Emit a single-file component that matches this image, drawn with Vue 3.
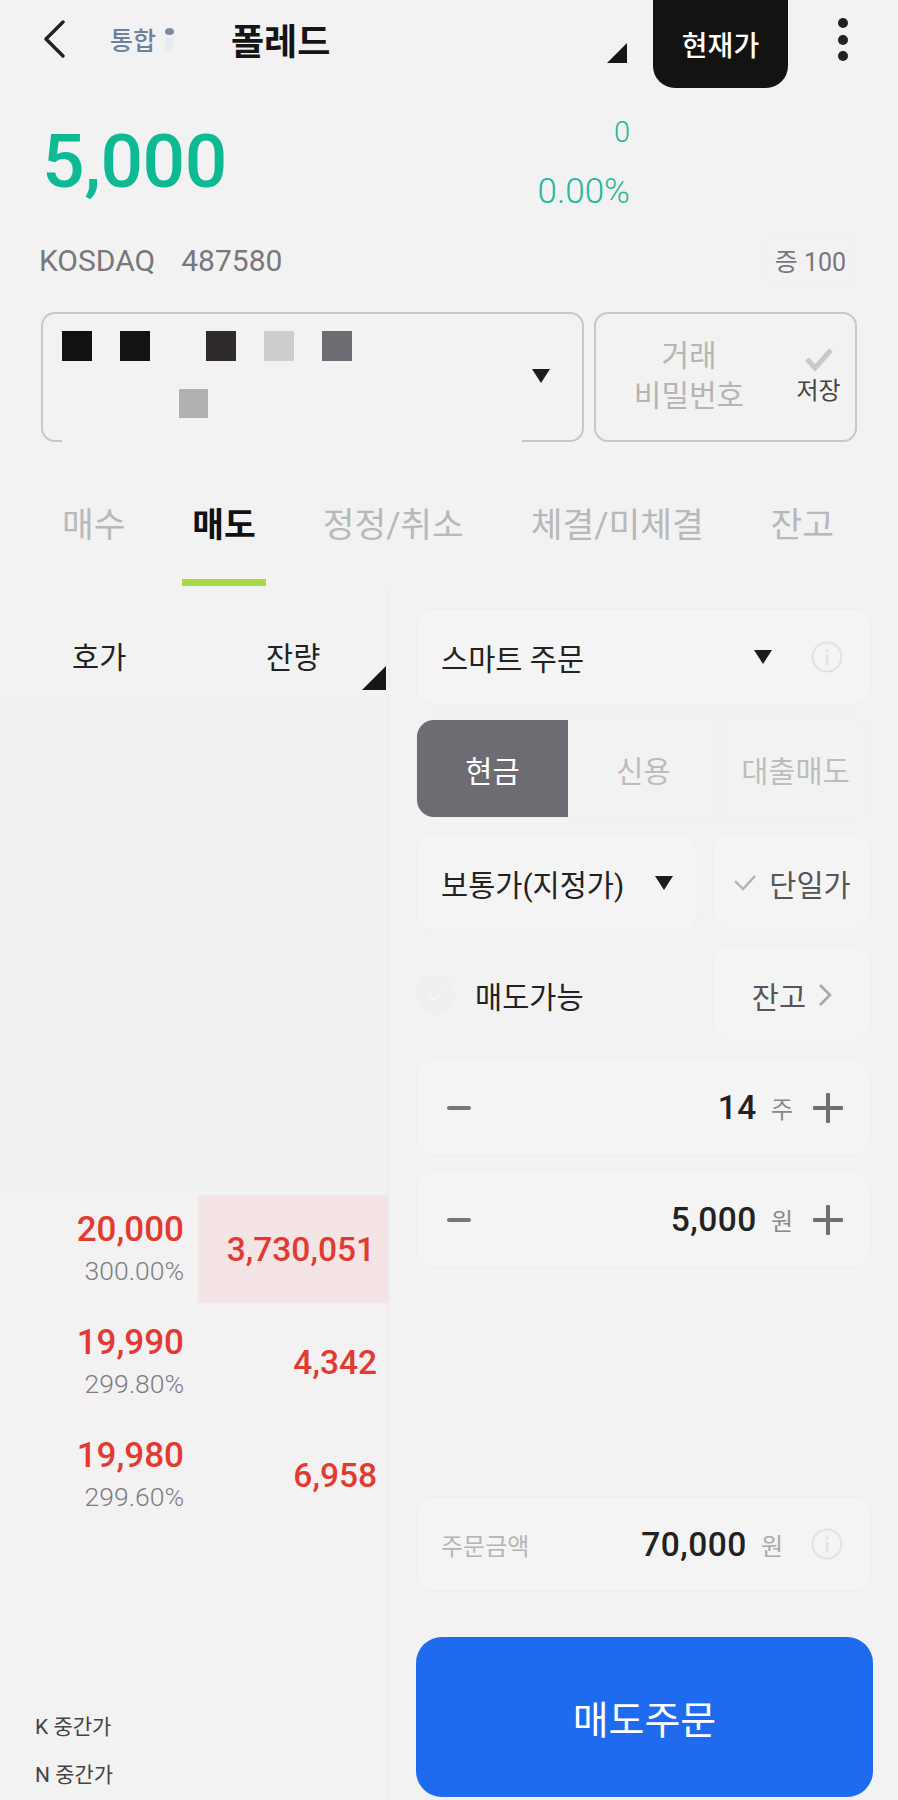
<script setup>
const tabs = [
  { label: '매수', active: false },
  { label: '매도', active: true },
  { label: '정정/취소', active: false },
  { label: '체결/미체결', active: false },
  { label: '잔고', active: false },
]
const rows = [
  { price: '20,000', pct: '300.00%', qty: '3,730,051', hi: true },
  { price: '19,990', pct: '299.80%', qty: '4,342', hi: false },
  { price: '19,980', pct: '299.60%', qty: '6,958', hi: false },
]
const redacted = ['#111111', '#131313', 'transparent', '#2f2a2b', '#cdcdcd', '#6d6c73']
</script>

<template>
  <div class="page">
    <header class="top">
      <svg class="back" width="24" height="38" viewBox="0 0 24 38"><path d="M21 2 L4 19 L21 36" fill="none" stroke="#222" stroke-width="3.4" stroke-linecap="round" stroke-linejoin="round"/></svg>
      <span class="market">통합</span>
      <span class="dotcol"><i></i><i class="pale"></i></span>
      <span class="name">폴레드</span>
      <span class="corner small"></span>
      <button class="now">현재가</button>
      <span class="more"><i></i><i></i><i></i></span>
    </header>

    <section class="quote">
      <div class="price">5,000</div>
      <div class="change"><div>0</div><div>0.00%</div></div>
    </section>

    <section class="meta">
      <span class="code"><span>KOSDAQ</span><span>487580</span></span>
      <span class="lot">증 100</span>
    </section>

    <section class="account">
      <div class="acct">
        <div class="blur">
          <div class="line1"><i v-for="(c, i) in redacted" :key="i" :style="{ background: c }"></i></div>
          <div class="line2"><i></i></div>
        </div>
        <span class="tri acct-tri"></span>
      </div>
      <div class="pw">
        <div class="pw-text">거래<br>비밀번호</div>
        <div class="pw-save">
          <svg width="30" height="26" viewBox="0 0 30 26"><path d="M3 13 L11 22 L27 4" fill="none" stroke="#c9c9c9" stroke-width="5"/></svg>
          <span>저장</span>
        </div>
      </div>
    </section>

    <nav class="tabs">
      <span v-for="t in tabs" :key="t.label" class="tab" :class="{ on: t.active }">{{ t.label }}</span>
    </nav>

    <main class="body">
      <aside class="book">
        <div class="book-head"><span class="h1">호가</span><span class="h2">잔량</span><span class="corner big"></span></div>
        <div class="book-empty"></div>
        <div class="book-list">
          <div v-for="r in rows" :key="r.price" class="row">
            <div class="p"><b>{{ r.price }}</b><small>{{ r.pct }}</small></div>
            <div class="q" :class="{ hi: r.hi }">{{ r.qty }}</div>
          </div>
        </div>
        <div class="mid"><div>K 중간가</div><div>N 중간가</div></div>
      </aside>

      <div class="form">
        <div class="card smart">
          <span class="txt">스마트 주문</span>
          <span class="tri"></span>
          <svg class="info" width="32" height="32" viewBox="0 0 32 32"><circle cx="16" cy="16" r="14.5" fill="none" stroke="#e2e2e2" stroke-width="2"/><circle cx="16" cy="10" r="1.8" fill="#e2e2e2"/><rect x="14.6" y="14" width="2.8" height="10" fill="#e2e2e2"/></svg>
        </div>
        <div class="seg">
          <span class="s on">현금</span>
          <span class="s">신용</span>
          <span class="s last">대출매도</span>
        </div>
        <div class="two">
          <div class="card normal"><span class="txt">보통가(지정가)</span><span class="tri"></span></div>
          <div class="card single">
            <svg width="24" height="17" viewBox="0 0 24 17"><path d="M2 7 L10 15 L22 2" fill="none" stroke="#b3b3b3" stroke-width="2.4"/></svg>
            <span>단일가</span>
          </div>
        </div>
        <div class="two avail-row">
          <div class="avail">
            <span class="chk"><svg width="18" height="14" viewBox="0 0 18 14"><path d="M2 7 L7 12 L16 2" fill="none" stroke="#f4f5f4" stroke-width="2.5"/></svg></span>
            <span class="txt">매도가능</span>
          </div>
          <div class="card single bal">
            <span>잔고</span>
            <svg width="14" height="24" viewBox="0 0 14 24"><path d="M2 2 L12 12 L2 22" fill="none" stroke="#a8a8a8" stroke-width="2.6"/></svg>
          </div>
        </div>
        <div class="card stepper first">
          <span class="minus"></span>
          <span class="val">14</span><span class="unit">주</span>
          <span class="plus"></span>
        </div>
        <div class="card stepper">
          <span class="minus"></span>
          <span class="val">5,000</span><span class="unit">원</span>
          <span class="plus"></span>
        </div>
        <div class="spacer"></div>
        <div class="card total">
          <span class="lbl">주문금액</span>
          <span class="val">70,000</span><span class="unit">원</span>
          <svg class="info" width="32" height="32" viewBox="0 0 32 32"><circle cx="16" cy="16" r="14.5" fill="none" stroke="#e2e2e2" stroke-width="2"/><circle cx="16" cy="10" r="1.8" fill="#e2e2e2"/><rect x="14.6" y="14" width="2.8" height="10" fill="#e2e2e2"/></svg>
        </div>
        <button class="submit">매도주문</button>
      </div>
    </main>
  </div>
</template>

<style>
html, body { margin: 0; background: #f2f2f3; }
</style>

<style scoped>
* { box-sizing: border-box; }
.page {
  width: 898px; height: 1800px; overflow: hidden; background: #f2f2f3; color: #222;
  font-family: "Roboto", "Noto Sans CJK KR", sans-serif;
  display: flex; flex-direction: column;
}
.top { height: 88px; flex: none; display: flex; align-items: center; padding-left: 42px; position: relative; }
.back { margin-top: -10px; }
.market { margin-left: 44px; margin-top: -10px; font-size: 25px; font-weight: 500; color: #6f809b; width: 46px; white-space: nowrap; }
.dotcol { width: 10px; margin-left: 8px; margin-top: -10px; display: flex; flex-direction: column; gap: 3px; align-items: center; }
.dotcol i { width: 9px; height: 7px; border-radius: 50%; background: #7b8aa3; }
.dotcol i.pale { height: 13px; border-radius: 2px; background: #e9ebf0; }
.name { margin-left: 57px; margin-top: -10px; font-size: 36px; font-weight: 700; color: #151515; white-space: nowrap; }
.corner { width: 0; height: 0; border-style: solid; border-color: transparent #151515 #151515 transparent; position: absolute; }
.corner.small { border-width: 10px; right: 271px; top: 43px; }
.now {
  position: absolute; left: 653px; top: -20px; width: 135px; height: 108px; border: 0; border-radius: 22px;
  background: #131313; color: #fff; font: 500 28px "Noto Sans CJK KR", sans-serif; padding: 20px 0 0;
}
.more { position: absolute; left: 838px; top: 18px; display: flex; flex-direction: column; gap: 6.5px; }
.more i { width: 10px; height: 10px; border-radius: 50%; background: #222; }

.quote { height: 140px; flex: none; display: flex; justify-content: space-between; padding: 0 268px 0 42px; color: #0dba94; }
.price { font-size: 75px; font-weight: 500; line-height: 120px; margin-top: 13px; letter-spacing: -.5px; }
.change { text-align: right; font-size: 35px; color: #22b79a; font-weight: 300; line-height: 64px; margin-top: 16px; }
.change div:first-child { font-size: 29px; line-height: 56px; }

.meta { height: 72px; flex: none; display: flex; align-items: center; justify-content: space-between; padding: 0 43px 0 39px; margin-top: -4px; }
.code { display: flex; gap: 26px; font-size: 30px; color: #77777c; font-weight: 400; }
.lot { width: 89px; height: 55px; display: flex; align-items: center; justify-content: center; border: 1px solid #efefef; border-radius: 12px; font-size: 25px; color: #77777c; white-space: nowrap; }

.account { flex: none; display: flex; gap: 10px; margin: 16px 41px 0 41px; height: 130px; }
.acct { width: 543px; border: 2px solid #c8c8c8; border-radius: 14px; position: relative; display: flex; }
.blur { position: absolute; left: 19px; right: 60px; top: 0; bottom: -2px; background: #f2f2f3; padding: 17px 0 0 0; }
.line1 { display: flex; gap: 28px; }
.line1 i { width: 30px; height: 30px; }
.line1 i:nth-child(3) { width: 29px; margin-right: -29px; }
.line2 { margin: 28px 0 0 117px; }
.line2 i { display: block; width: 29px; height: 29px; background: #b1b1b1; }
.tri { width: 0; height: 0; border-style: solid; border-width: 14px 9px 0; border-color: #1c1c1c transparent transparent; display: block; flex: none; }
.acct-tri { position: absolute; right: 32px; top: 55px; }
.pw { flex: 1; border: 2px solid #c8c8c8; border-radius: 14px; display: flex; }
.pw-text { width: 186px; text-align: center; font-size: 30px; line-height: 40px; color: #b5b5b5; padding-top: 22px; white-space: nowrap; }
.pw-save { flex: 1; display: flex; flex-direction: column; align-items: center; padding-top: 32px; font-size: 24px; color: #444; line-height: 30px; }
.pw-save svg { margin-bottom: 4px; }

.tabs { flex: none; height: 114px; margin-top: 30px; padding: 0 64px 0 62px; display: flex; justify-content: space-between; align-items: flex-start; }
.tab { font-size: 34.5px; line-height: 50px; color: #b8b8b8; padding-top: 28px; height: 113px; white-space: nowrap; font-weight: 400; }
.tab.on { color: #111; font-weight: 700; padding: 28px 10px 0; margin: 0 -10px; height: 114px; border-bottom: 7px solid #a9d84b; }

.body { flex: 1; display: flex; min-height: 0; }
.book { width: 390px; flex: none; border-right: 2px solid #efefef; display: flex; flex-direction: column; }
.book-head { flex: none; height: 111px; position: relative; font-size: 29.5px; color: #222; }
.h1 { position: absolute; left: 72px; top: 48px; }
.h2 { position: absolute; left: 266px; top: 48px; }
.corner.big { border-width: 12.5px; right: 2px; top: 80px; }
.book-empty { flex: none; height: 495px; margin-left: 4px; background: #f0f2f1; }
.book-list { flex: none; height: 491px; background: #f3f1f2; margin-left: 2px; }
.row { height: 113px; display: flex; }
.p { width: 196px; text-align: right; padding: 18px 14px 0 0; display: flex; flex-direction: column; }
.p b { font-size: 35px; font-weight: 500; color: #e23a31; line-height: 40px; }
.p small { font-size: 26.5px; font-weight: 300; color: #7d7d80; line-height: 42px; }
.q { flex: 1; text-align: right; padding: 38px 11px 0 0; font-size: 33.5px; font-weight: 500; color: #e23a31; line-height: 40px; }
.q.hi { background: #f4e4e6; height: 108px; margin-top: 3px; padding-top: 35px; padding-right: 13px; }
.mid { flex: 1; padding: 20px 0 0 35px; font-size: 21px; color: #444; line-height: 48px; }

.form { flex: 1; display: flex; flex-direction: column; padding: 22px 28px 0 26px; }
.card { border: 1px solid #eeeeef; border-radius: 18px; background: #f4f4f4; display: flex; align-items: center; }
.smart { height: 97px; padding: 0 27px 0 24px; }
.txt { font-size: 29.5px; color: #222; white-space: nowrap; }
.smart .txt { flex: 1; }
.info { flex: none; margin-left: 39px; }
.seg { height: 99px; margin-top: 14px; display: flex; border: 1px solid #eeeeef; border-radius: 18px; overflow: hidden; }
.s { width: 151px; display: flex; align-items: center; justify-content: center; font-size: 29.5px; color: #bdbdbd; }
.s.on { background: #6d6c72; color: #fff; }
.s.last { flex: 1; border-left: 2px solid #efefef; white-space: nowrap; }
.two { display: flex; gap: 15px; margin-top: 16px; }
.normal { width: 282px; height: 97px; padding: 0 24px; justify-content: space-between; }
.single { flex: 1; height: 97px; justify-content: center; gap: 12px; font-size: 29.5px; color: #55555a; white-space: nowrap; }
.avail-row { margin-top: 15px; }
.avail { width: 282px; display: flex; align-items: center; gap: 19px; }
.chk { width: 40px; height: 40px; border-radius: 50%; background: #eef0ef; display: flex; align-items: center; justify-content: center; }
.bal { gap: 12px; }
.stepper { height: 97px; margin-top: 15px; padding: 0 27px 0 30px; }
.stepper.first { margin-top: 16px; }
.minus { width: 24px; height: 4px; background: #77777a; border-radius: 2px; margin-right: auto; }
.val { font-size: 33.5px; font-weight: 500; color: #222; letter-spacing: .5px; }
.unit { font-size: 24px; color: #888; margin-left: 14px; }
.plus { width: 30px; height: 30px; margin-left: 20px; position: relative; display: block; }
.plus::before, .plus::after { content: ""; position: absolute; background: #6f6f72; border-radius: 1px; }
.plus::before { left: 0; right: 0; top: 13px; height: 4px; }
.plus::after { top: 0; bottom: 0; left: 13px; width: 4px; }
.spacer { flex: 1; }
.total { height: 96px; padding: 0 27px 0 24px; margin-bottom: 45px; }
.lbl { font-size: 24px; color: #b5b5b5; margin-right: auto; }
.total .unit { color: #aaa; }
.total .info { margin-left: 28px; }
.submit { height: 160px; margin: 0 -2px 3px 0; border: 0; border-radius: 26px; background: #1e6bf0; color: #fff; font: 400 39px "Noto Sans CJK KR", sans-serif; flex: none; }
</style>
